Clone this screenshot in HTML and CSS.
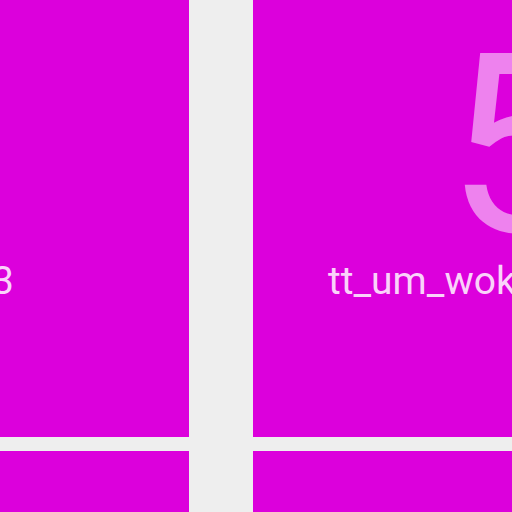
FILE: index.html
```html
<!DOCTYPE html>
<html>
<head>
<meta charset="utf-8">
<link rel="stylesheet" href="styles.css">
</head>
<body>
<div class="grid">
  <div class="tile tile-left">
    <div class="num num-left">2</div>
    <div class="name name-left"><span>tt_um_wokwi_3</span></div>
  </div>
  <div class="tile tile-right">
    <div class="num num-right">5</div>
    <div class="name name-right"><span>tt_um_wokwi_5</span></div>
  </div>
  <div class="tile"></div>
  <div class="tile"></div>
</div>
</body>
</html>
```
FILE: styles.css
```css
html, body {
  margin: 0;
  padding: 0;
  width: 512px;
  height: 512px;
  overflow: hidden;
  background: #eeeeee;
  font-family: Roboto, "Noto Sans", sans-serif;
}
.grid {
  display: grid;
  grid-template-columns: 189px 420px;
  grid-template-rows: 437px 200px;
  column-gap: 64px;
  row-gap: 14px;
}
.tile {
  background: #dc00dc;
  overflow: hidden;
  display: flex;
  flex-direction: column;
}
.num {
  font-size: 250px;
  line-height: 250px;
  height: 250px;
  margin-top: 22px;
  color: #ee82ee;
  white-space: nowrap;
}
.num-left {
  visibility: hidden;
}
.num-right {
  padding-left: 193px;
}
.name {
  font-size: 39px;
  line-height: 39px;
  margin-top: -10px;
  color: #fad2fa;
  white-space: nowrap;
  display: flex;
}
.name-left {
  justify-content: flex-end;
  padding-right: 175px;
}
.name-right {
  padding-left: 75px;
}
```
